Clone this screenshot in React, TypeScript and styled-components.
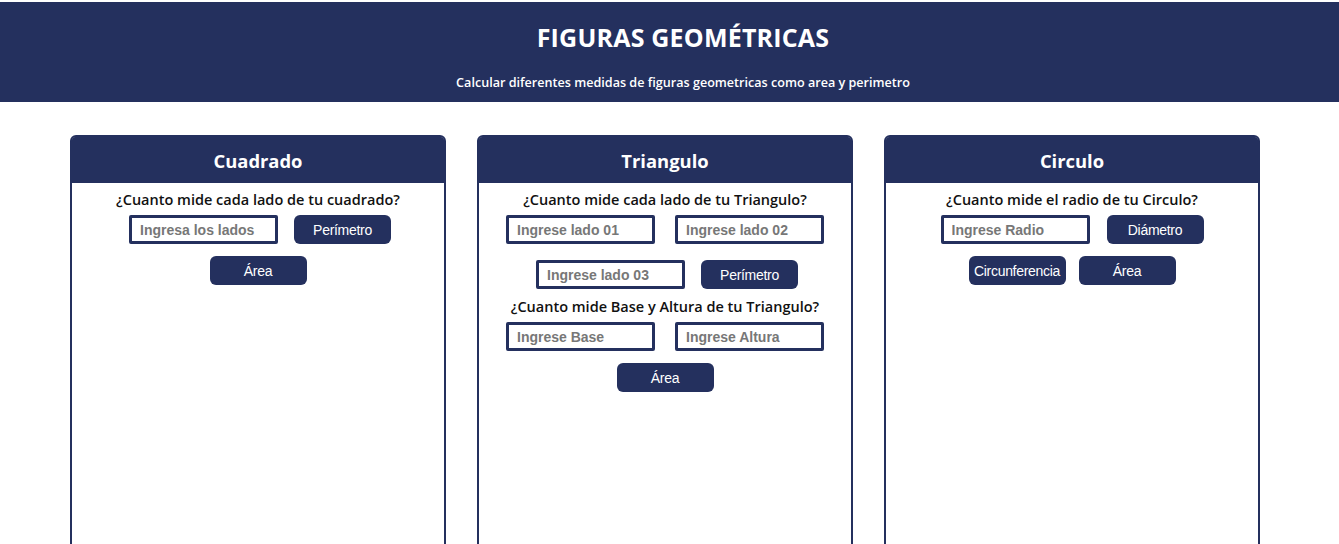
import React from "react";
import styled, { createGlobalStyle } from "styled-components";

const NAVY = "#24305e";

const Global = createGlobalStyle`
  html, body { margin: 0; padding: 0; background: #fff; }
  body { font-family: "Open Sans", "DejaVu Sans", sans-serif; }
  * { box-sizing: border-box; }
`;

const Page = styled.div`
  padding-top: 2px;
`;

const Header = styled.header`
  background: ${NAVY};
  height: 100px;
  padding-left: 27px;
  display: flex;
  flex-direction: column;
  align-items: center;
  color: #fff;
`;

const Title = styled.h1`
  margin: 19px 0 0;
  font-family: "Open Sans", sans-serif;
  font-weight: 700;
  font-size: 25px;
  line-height: 32px;
  letter-spacing: 0.2px;
`;

const Subtitle = styled.p`
  margin: 22px 0 0;
  font-family: "Open Sans", sans-serif;
  font-weight: 600;
  font-size: 12.6px;
  line-height: 16px;
`;

const Cards = styled.main`
  display: flex;
  gap: 31px;
  padding: 33px 0 0 70px;
`;

const Card = styled.section`
  width: 376px;
  height: 480px;
  border: 2px solid ${NAVY};
  border-radius: 6px 6px 0 0;
  display: flex;
  flex-direction: column;
  align-items: center;
`;

const CardHeader = styled.h2`
  margin: 0;
  width: 100%;
  height: 46px;
  padding-top: 1px;
  background: ${NAVY};
  color: #fff;
  border-radius: 3px 3px 0 0;
  font-family: "Open Sans", sans-serif;
  font-weight: 700;
  font-size: 18.4px;
  display: flex;
  align-items: center;
  justify-content: center;
`;

const Question = styled.p<{ $top?: number }>`
  margin: ${(p) => p.$top ?? 8}px 0 0;
  font-family: "Open Sans", sans-serif;
  font-weight: 600;
  font-size: 14.5px;
  line-height: 18px;
  color: #111;
`;

const Row = styled.div<{ $gap: number; $top: number; $shift?: number }>`
  display: flex;
  gap: ${(p) => p.$gap}px;
  margin-top: ${(p) => p.$top}px;
  margin-left: ${(p) => p.$shift ?? 0}px;
`;

const Input = styled.input`
  width: 149px;
  height: 29px;
  border: 3px solid ${NAVY};
  border-radius: 2px;
  padding: 0 8px;
  font-family: "Liberation Sans", Arial, sans-serif;
  font-weight: 700;
  font-size: 14px;
  color: #333;
  outline: none;
  &::placeholder { color: #777; }
`;

const Button = styled.button`
  width: 97px;
  height: 29px;
  border: none;
  border-radius: 6px;
  background: ${NAVY};
  color: #fff;
  font-family: "Liberation Sans", Arial, sans-serif;
  font-size: 14px;
  padding: 0;
  letter-spacing: -0.3px;
  cursor: pointer;
`;

export default function App() {
  return (
    <>
      <Global />
      <Page>
        <Header>
          <Title>FIGURAS GEOMÉTRICAS</Title>
          <Subtitle>Calcular diferentes medidas de figuras geometricas como area y perimetro</Subtitle>
        </Header>
        <Cards>
          <Card>
            <CardHeader>Cuadrado</CardHeader>
            <Question>¿Cuanto mide cada lado de tu cuadrado?</Question>
            <Row $gap={16} $top={6} $shift={4}>
              <Input placeholder="Ingresa los lados" />
              <Button>Perímetro</Button>
            </Row>
            <Row $gap={0} $top={12}>
              <Button>Área</Button>
            </Row>
          </Card>
          <Card>
            <CardHeader>Triangulo</CardHeader>
            <Question>¿Cuanto mide cada lado de tu Triangulo?</Question>
            <Row $gap={20} $top={6}>
              <Input placeholder="Ingrese lado 01" />
              <Input placeholder="Ingrese lado 02" />
            </Row>
            <Row $gap={16} $top={16} $shift={4}>
              <Input placeholder="Ingrese lado 03" />
              <Button>Perímetro</Button>
            </Row>
            <Question $top={9}>¿Cuanto mide Base y Altura de tu Triangulo?</Question>
            <Row $gap={20} $top={6}>
              <Input placeholder="Ingrese Base" />
              <Input placeholder="Ingrese Altura" />
            </Row>
            <Row $gap={0} $top={12}>
              <Button>Área</Button>
            </Row>
          </Card>
          <Card>
            <CardHeader>Circulo</CardHeader>
            <Question>¿Cuanto mide el radio de tu Circulo?</Question>
            <Row $gap={17} $top={6}>
              <Input placeholder="Ingrese Radio" />
              <Button>Diámetro</Button>
            </Row>
            <Row $gap={13} $top={12}>
              <Button>Circunferencia</Button>
              <Button>Área</Button>
            </Row>
          </Card>
        </Cards>
      </Page>
    </>
  );
}
